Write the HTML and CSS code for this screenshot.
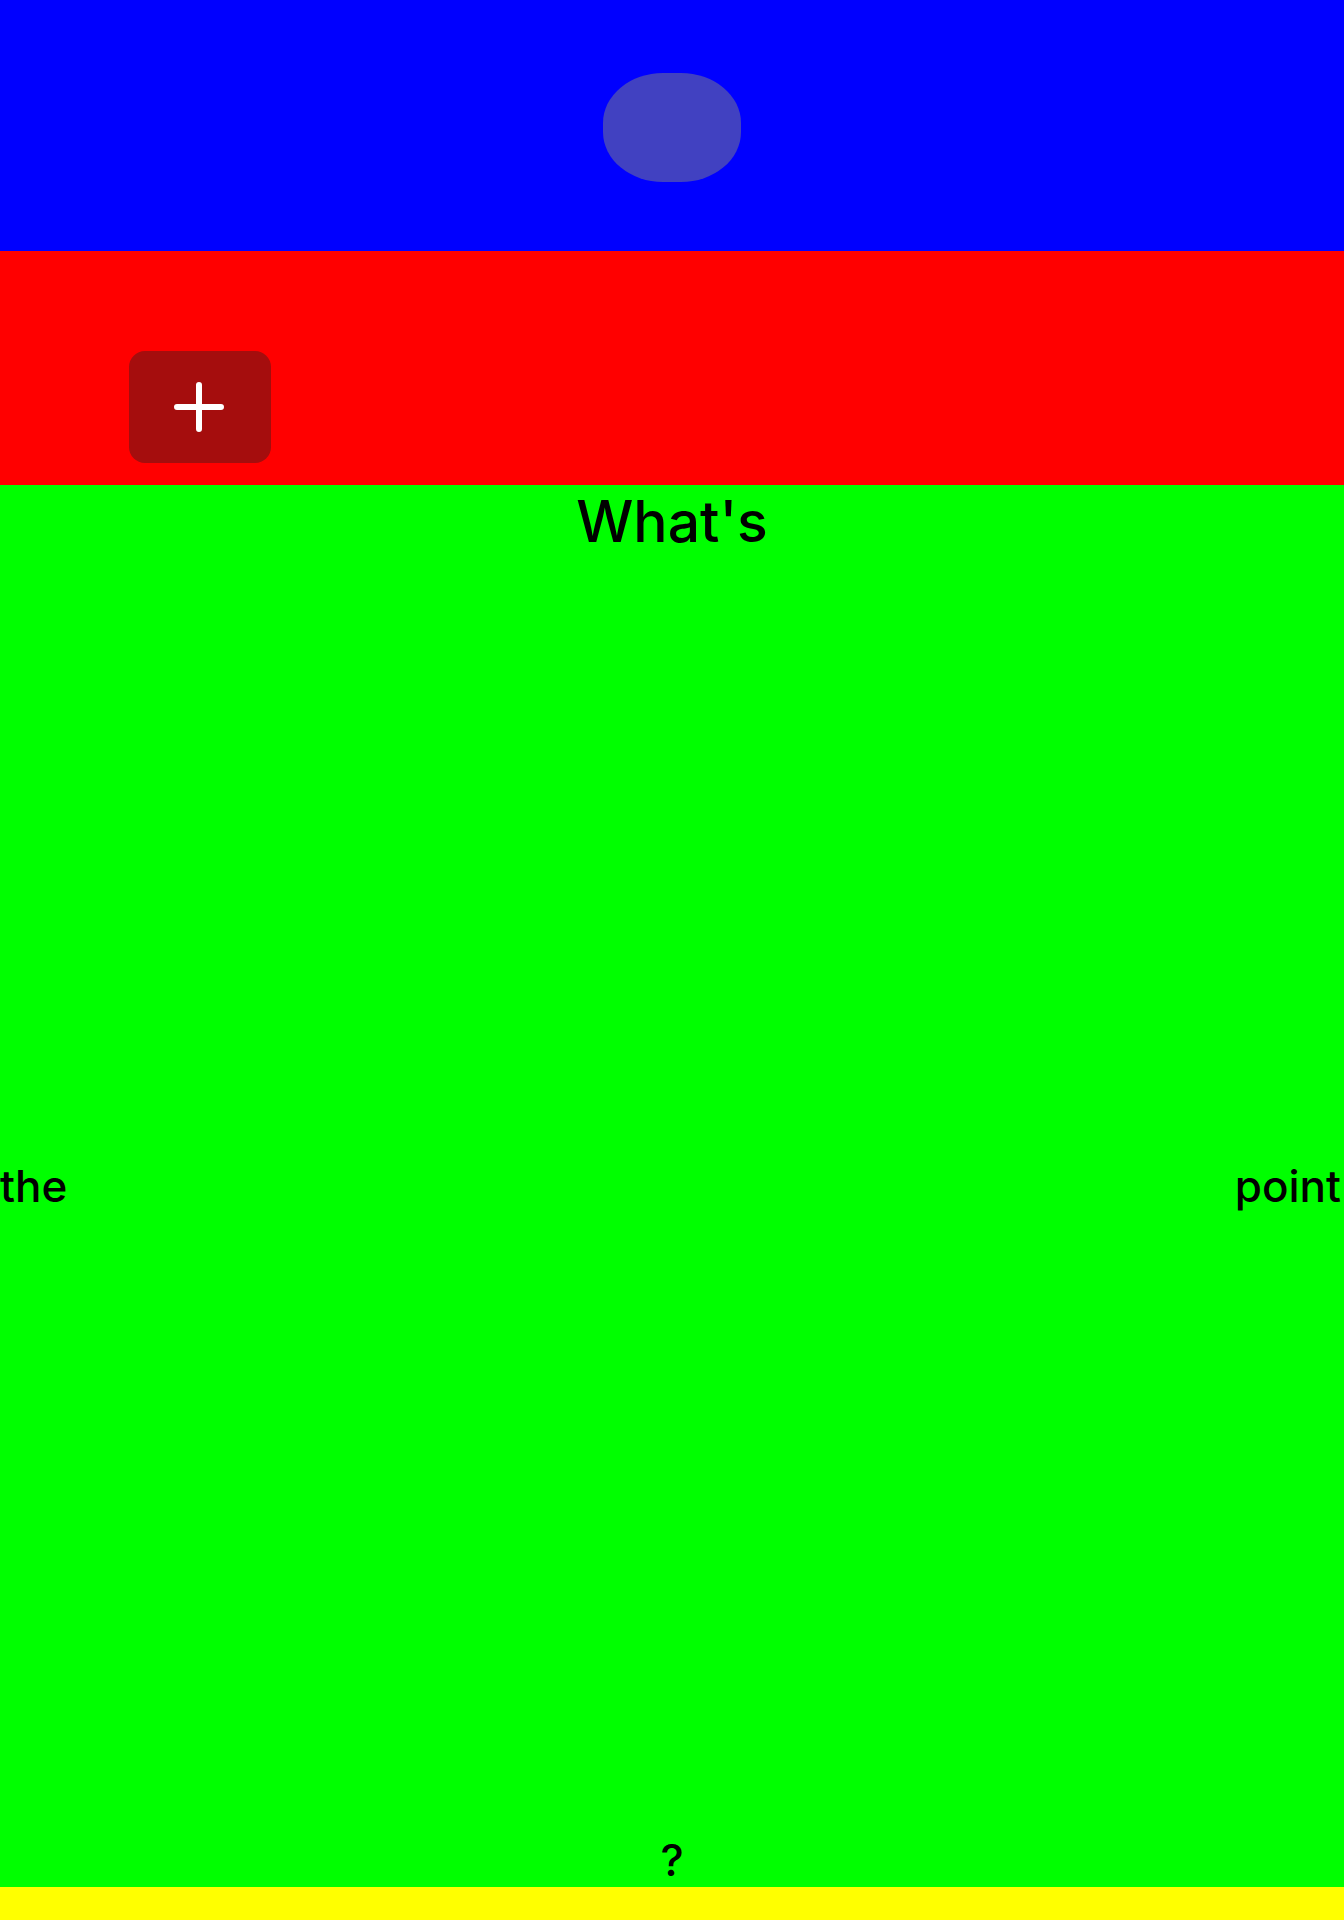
FILE: index.html
```html
<!DOCTYPE html>
<html>
<head>
<meta charset="utf-8">
<link rel="stylesheet" href="styles.css">
</head>
<body>
<header class="top">
  <div class="blob"></div>
</header>
<section class="bar">
  <button class="add" aria-label="Add">
    <svg width="52" height="52" viewBox="0 0 52 52"><path d="M26 4V48M4 26H48" stroke="#fff" stroke-width="6" stroke-linecap="round" fill="none"/></svg>
  </button>
</section>
<main class="stage">
  <div class="w-top">What's</div>
  <div class="mid"><span class="w-side">the</span><span class="w-side">point</span></div>
  <div class="w-bottom">?</div>
</main>
<footer class="foot"></footer>
</body>
</html>
```
FILE: styles.css
```css
html, body { margin: 0; padding: 0; }
body { font-family: Inter, "Noto Sans", sans-serif; color: #000; width: 1344px; }
.top { height: 251px; background: #0000ff; display: flex; align-items: center; justify-content: center; padding-top: 4px; box-sizing: border-box; }
.blob { width: 138px; height: 109px; background: #4141c1; border-radius: 60px / 50px; }
.bar { height: 234px; background: #ff0000; display: flex; align-items: flex-end; padding: 0 0 22px 129px; box-sizing: border-box; }
.add { width: 142px; height: 112px; border: none; border-radius: 16px; background: #a50d0d; display: flex; align-items: center; justify-content: center; padding: 0; }
.add svg { display: block; margin-right: 2px; }
.stage { height: 1402px; background: #00ff00; display: grid; grid-template-areas: "all"; font-weight: 500; }
.stage > * { grid-area: all; }
.w-top { align-self: start; font-size: 57px; text-align: center; line-height: 74px; }
.mid { align-self: center; display: flex; justify-content: space-between; align-items: center; padding: 0 3px 0 0; }
.w-side { font-size: 44px; }
.w-bottom { align-self: end; font-size: 44px; text-align: center; }
.foot { height: 33px; background: #ffff00; }
```
